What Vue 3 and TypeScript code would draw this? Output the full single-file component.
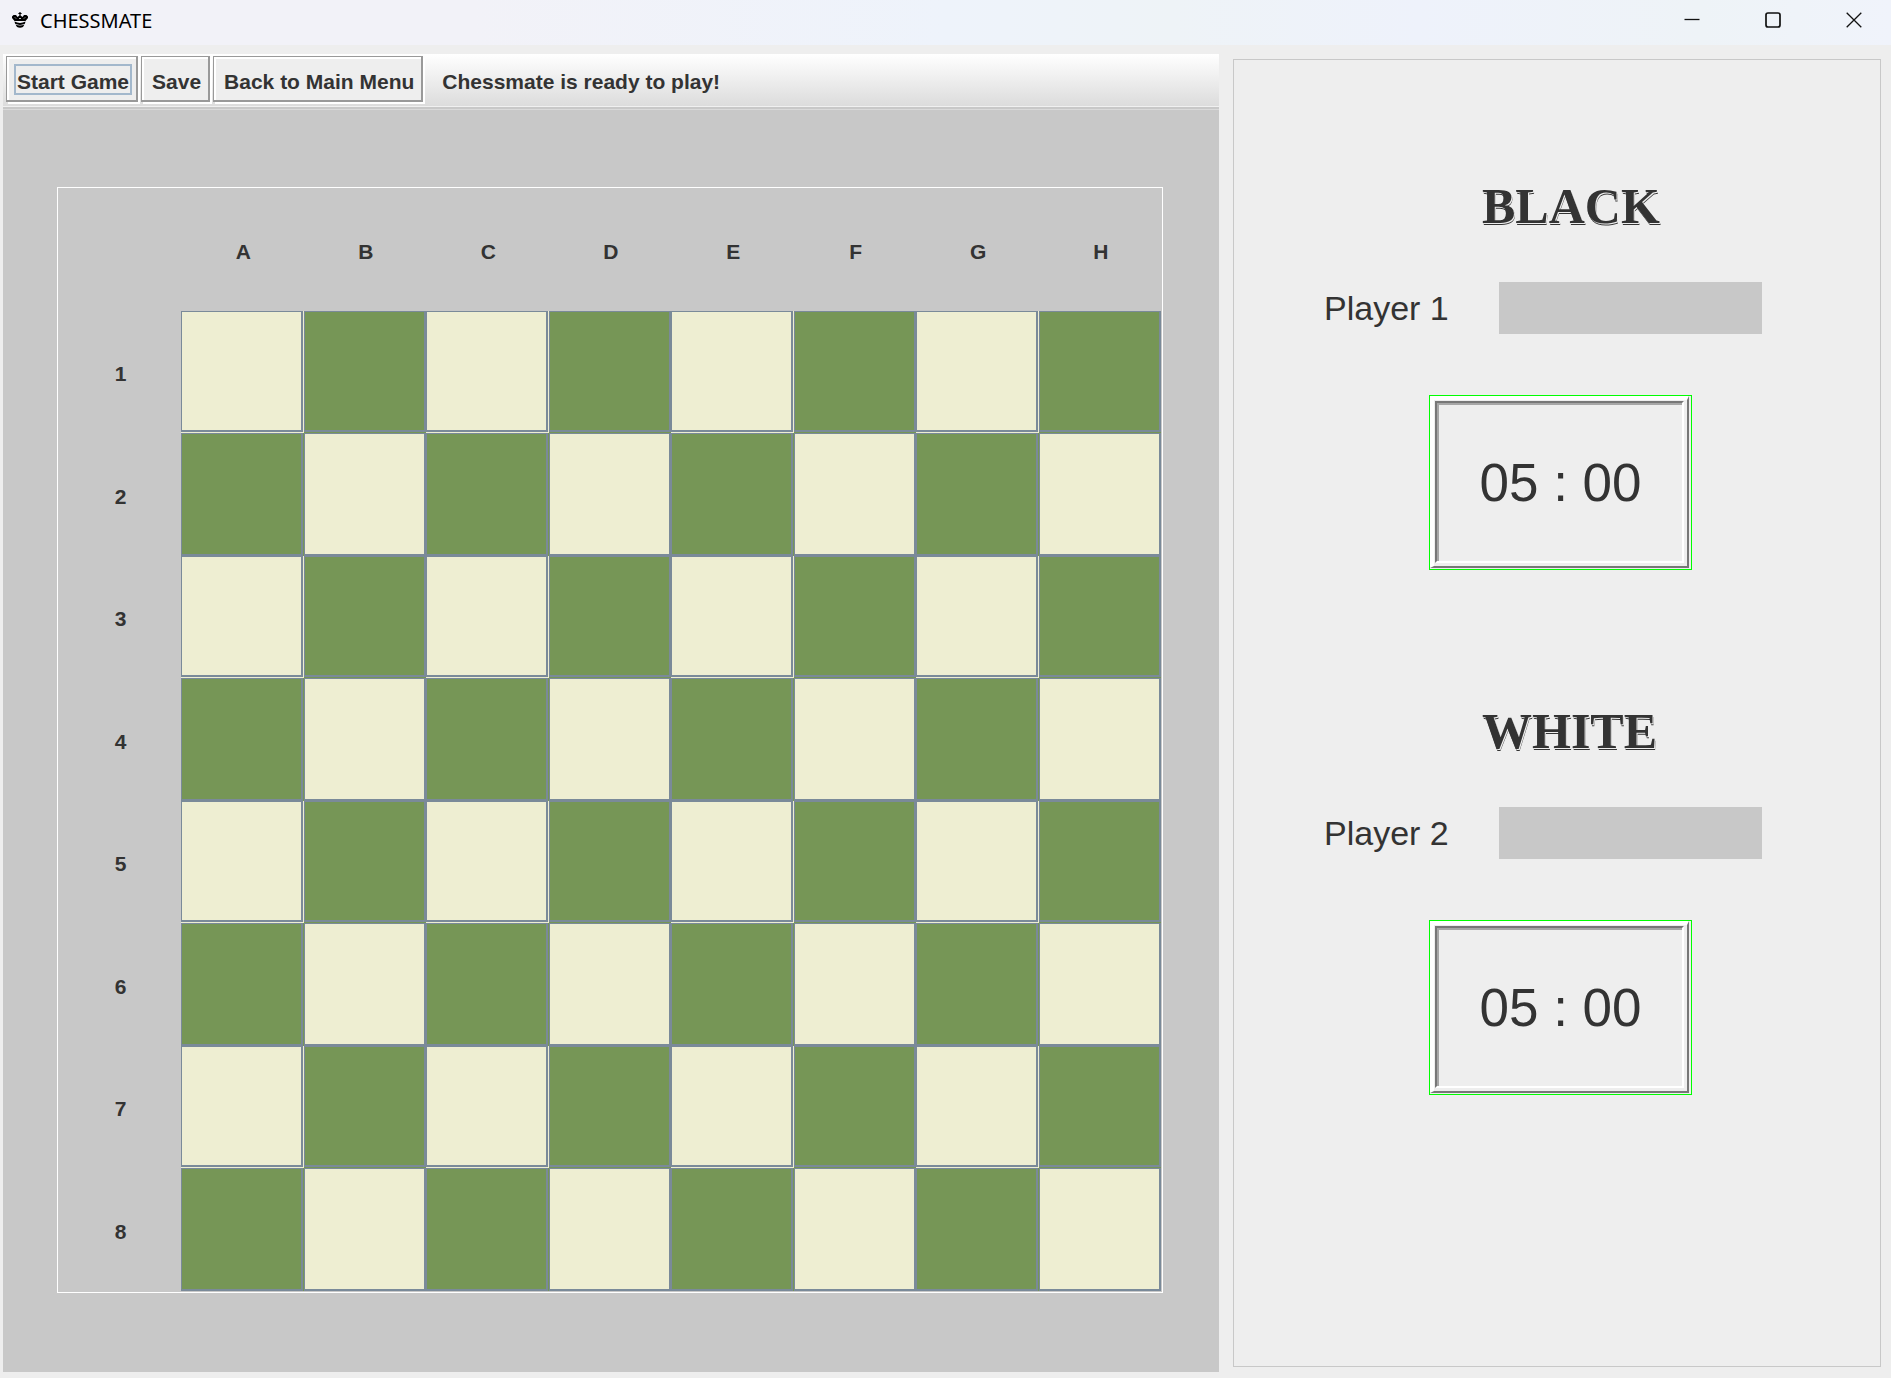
<script setup lang="ts">
import { ref } from 'vue'

interface Player {
  id: string
  side: string
  label: string
  name: string
  clock: string
}

const files = ['A', 'B', 'C', 'D', 'E', 'F', 'G', 'H']
const ranks = [1, 2, 3, 4, 5, 6, 7, 8]
const status = ref('Chessmate is ready to play!')

const players = ref<Player[]>([
  { id: 'player-1', side: 'BLACK', label: 'Player 1', name: '', clock: '05 : 00' },
  { id: 'player-2', side: 'WHITE', label: 'Player 2', name: '', clock: '05 : 00' },
])

// A thin seam of the square's own colour follows every first, third, fifth... file and rank.
const squareClasses = (rank: number, col: number) => ({
  dark: (rank + col) % 2 === 0,
  'seam-right': col % 2 === 0,
  'seam-bottom': rank % 2 === 1,
})
</script>

<template>
  <div class="window">
    <header class="titlebar">
      <svg class="app-icon" viewBox="0 0 16 16" aria-hidden="true">
        <path d="M7.400 0h1.200v1h1v1h-1v1.500L10.500 5l1.500-2h2.500L16 4.500V6l-2.500 3h-11L0 6V4.500L1.500 3H4l1.500 2 1.900-1.500V2h-1V1h1z" />
        <path d="M2.500 9.500q5.500 2.800 11 0l-.6 2.300q-4.900 2.200-9.800 0zM3.500 12.600q4.500 1.800 9 0L11 15q-3 1.600-6 0z" />
        <path d="M3 5.500l1 1M13 5.500l-1 1M7 6.500h2" stroke="#f2f2f8" stroke-width="0.800" />
      </svg>
      <h1 class="title">CHESSMATE</h1>
      <div class="window-controls">
        <button type="button" aria-label="Minimize">
          <svg viewBox="0 0 16 16"><path d="M0.500 7.500h15" /></svg>
        </button>
        <button type="button" aria-label="Maximize">
          <svg viewBox="0 0 16 16"><rect x="1" y="1" width="14" height="14" rx="2" stroke-width="1.700" /></svg>
        </button>
        <button type="button" aria-label="Close">
          <svg viewBox="0 0 16 16"><path d="M0.700 0.700l14.600 14.600M15.300 0.700L0.700 15.300" /></svg>
        </button>
      </div>
    </header>

    <main class="content">
      <section class="game">
        <div class="toolbar">
          <button type="button" class="tool"><span class="focus">Start Game</span></button>
          <button type="button" class="tool">Save</button>
          <button type="button" class="tool">Back to Main Menu</button>
          <span class="status">{{ status }}</span>
        </div>
        <div class="table-top">
          <div class="board">
            <span></span>
            <span v-for="file in files" :key="file" class="coord">{{ file }}</span>
            <template v-for="rank in ranks" :key="rank">
              <span class="coord">{{ rank }}</span>
              <button
                v-for="(file, col) in files"
                :key="file"
                type="button"
                class="square"
                :class="squareClasses(rank, col)"
                :aria-label="`${file}${rank}`"
              ><span class="face"></span></button>
            </template>
          </div>
        </div>
      </section>

      <aside class="players">
        <section v-for="player in players" :key="player.id" class="player">
          <h2 class="side">{{ player.side }}</h2>
          <div class="name-row">
            <label :for="player.id">{{ player.label }}</label>
            <input :id="player.id" v-model="player.name" type="text" class="name" />
          </div>
          <div class="clock">
            <div class="raised">
              <div class="lowered">{{ player.clock }}</div>
            </div>
          </div>
        </section>
      </aside>
    </main>
  </div>
</template>

<style>
body {
  margin: 0;
  background: #eeeeee;
}
</style>

<style scoped>
.window {
  box-sizing: border-box;
  min-height: 100vh;
  display: flex;
  flex-direction: column;
  background: #eeeeee;
  color: #333333;
  font-family: "Liberation Sans", Arial, sans-serif;
}

button {
  margin: 0;
  padding: 0;
  border: 0;
  border-radius: 0;
  color: inherit;
  font: inherit;
}

.titlebar {
  display: flex;
  align-items: center;
  height: 45px;
  padding-left: 12px;
  box-sizing: border-box;
  background: linear-gradient(90deg, #f2f2f8 0%, #f2f2f8 25%, #eef3fb 50%, #eef3f7 62%, #eef2fb 75%, #eef3f7 90%, #f0f3fb 100%);
  color: #000000;
}

.app-icon {
  width: 16px;
  height: 16px;
  margin-bottom: 6px;
}

.title {
  margin: 0 0 4px 12px;
  font: 400 20px/28px "Noto Sans", sans-serif;
}

.window-controls {
  display: flex;
  gap: 1px;
  margin: 0 -3px 6px auto;
}

.window-controls button {
  display: flex;
  justify-content: center;
  width: 80px;
  background: transparent;
}

.window-controls svg {
  width: 16px;
  height: 16px;
  fill: none;
  stroke: #111111;
  stroke-width: 1.3;
}

.content {
  flex: 1;
  display: grid;
  grid-template-columns: minmax(0, 1216fr) minmax(0, 648fr);
  gap: 14px;
  padding: 9px 10px 6px 3px;
}

.game {
  display: flex;
  flex-direction: column;
}

.toolbar {
  display: flex;
  align-items: flex-start;
  gap: 2px;
  height: 53px;
  box-sizing: border-box;
  padding: 2px 3px 0;
  border-bottom: 1px solid #f0f0f0;
  background: linear-gradient(#ffffff, #dcdcdc);
  font-size: 21px;
  font-weight: 700;
  line-height: 27px;
}

.tool {
  height: 46px;
  padding: 5px 7px 0 10px;
  border: solid #999999;
  border-width: 1px 2px 2px 1px;
  background: #eeeeee;
  box-shadow: inset 2px 2px 0 #ffffff, 2px 2px 0 #ffffff;
}

.focus {
  display: block;
  margin: -4px -3px 0;
  padding: 4px 1px 0 1px;
  border: 2px solid #a3b8cc;
  line-height: 23px;
}

.tool + .tool {
  margin-left: 1px;
}

.status {
  margin-left: 17px;
  padding-top: 12px;
}

.table-top {
  flex: 1;
  display: flex;
  align-items: center;
  padding: 0 56px 0 54px;
  background: #c8c8c8;
  box-shadow: inset 0 2px 0 #c8c8c8, inset 0 3px 0 #dadada;
}

.board {
  flex: 1;
  box-sizing: border-box;
  aspect-ratio: 1;
  display: grid;
  grid-template-columns: 123px repeat(8, minmax(0, 1fr));
  grid-template-rows: 123px repeat(8, minmax(0, 1fr));
  padding: 0 1px 1px 0;
  border: 1px solid #ffffff;
}

.coord {
  display: flex;
  align-items: center;
  justify-content: center;
  padding: 5px 0 0 2px;
  font-size: 21px;
  font-weight: 700;
}

.square {
  display: flex;
  background: #eeeed2;
}

.square.dark {
  background: #769656;
}

.seam-right {
  padding-right: 1px;
}

.seam-bottom {
  padding-bottom: 1px;
}

.face {
  flex: 1;
  align-self: stretch;
  border: solid #7a8a99;
  border-width: 1px 2px 2px 1px;
}

.players {
  margin: 5px 0;
  padding: 116px 118px 0 90px;
  border: 1px solid #c8c8c8;
}

.player {
  margin-bottom: 131px;
}

.side {
  margin: 0 0 46px 158px;
  font: 700 50px/60px "Liberation Serif", serif;
  text-shadow: 1px 1px 0 #eeeeee, 1px 2px 0 #333333;
}

.name-row {
  display: flex;
  align-items: center;
  justify-content: space-between;
  font-size: 34px;
  line-height: 52px;
}

.name {
  width: 263px;
  height: 52px;
  box-sizing: border-box;
  padding: 0 8px;
  border: 0;
  background: #c8c8c8;
  color: inherit;
  font: inherit;
}

.clock {
  display: flex;
  width: 263px;
  height: 175px;
  box-sizing: border-box;
  margin: 61px 0 0 105px;
  padding: 0 2px 1px 0;
  border: 1px solid #00ff00;
}

.raised {
  flex: 1;
  display: flex;
  padding: 1px 3px 3px 1px;
  border: solid #777777;
  border-width: 4px 2px 2px 4px;
  border-top-color: #ffffff;
  border-left-color: #ffffff;
}

.lowered {
  flex: 1;
  display: flex;
  align-items: center;
  justify-content: center;
  padding-left: 2px;
  border: 2px solid #ffffff;
  border-top-color: #777777;
  border-left-color: #777777;
  box-shadow: inset 2px 2px 0 #a6a6a6;
  font-size: 53px;
}
</style>
